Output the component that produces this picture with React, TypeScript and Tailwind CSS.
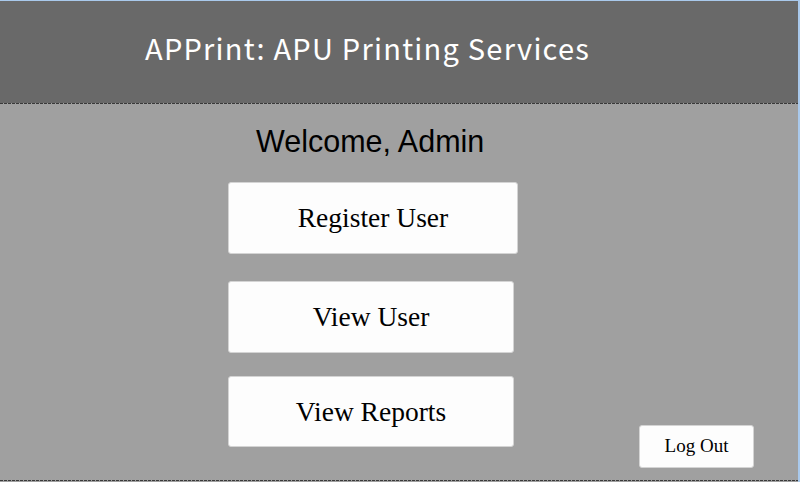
export default function App() {
  return (
    <div className="w-[800px] h-[482px] bg-[#a9c9ec] pt-px flex overflow-hidden">
      <div className="w-[798px] flex flex-col bg-[#a0a0a0]">
        <header className="h-[102px] bg-[#696969] pl-[145px] pt-[32px]">
          <h1 className="text-white text-[29px] tracking-[1.25px] font-['Noto_Sans_CJK_JP',sans-serif] leading-none">
            APPrint: APU Printing Services
          </h1>
        </header>
        <div className="h-px bg-[repeating-linear-gradient(90deg,#3a3a3a_0_3px,transparent_3px_4px)]" />
        <main className="h-[376px] flex">
          <div className="ml-[228px] pt-[22px] flex flex-col">
            <p className="ml-[28px] h-[30px] text-[30.5px] leading-none text-black font-['Liberation_Sans',Arial,sans-serif]">
              Welcome, Admin
            </p>
            <MenuButton label="Register User" className="mt-[26px] w-[290px] h-[72px]" />
            <MenuButton label="View User" className="mt-[27px] w-[286px] h-[72px]" />
            <MenuButton label="View Reports" className="mt-[23px] w-[286px] h-[71px]" />
          </div>
          <button className="ml-auto mr-[44px] mb-[12px] self-end w-[115px] h-[43px] bg-[#fdfdfd] border border-[#d4d4d4] rounded-[3px] text-[19px] text-black font-['Liberation_Serif','Times_New_Roman',serif]">
            Log Out
          </button>
        </main>
        <div className="h-px bg-[repeating-linear-gradient(90deg,#3a3a3a_0_3px,transparent_3px_4px)]" />
      </div>
    </div>
  );
}

function MenuButton({ label, className }: { label: string; className: string }) {
  return (
    <button
      className={`${className} bg-[#fdfdfd] border border-[#d4d4d4] rounded-[3px] text-[27.5px] text-black font-['Liberation_Serif','Times_New_Roman',serif]`}
    >
      {label}
    </button>
  );
}
